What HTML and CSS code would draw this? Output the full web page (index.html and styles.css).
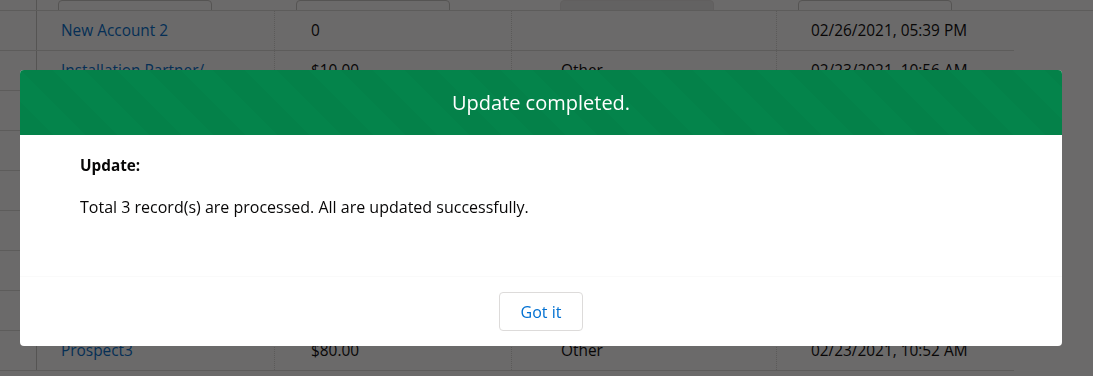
FILE: index.html
```html
<!DOCTYPE html>
<html lang="en">
<head>
  <meta charset="UTF-8" />
  <title>Mass Update</title>
  <link rel="stylesheet" href="styles.css">
</head>
<body>
  <main class="grid">
    <div class="filter-row">
      <div class="num-col"></div>
      <div class="filter-cell c1"><span class="filter-box"></span></div>
      <div class="filter-cell c2"><span class="filter-box"></span></div>
      <div class="filter-cell c3"><span class="filter-box disabled"></span></div>
      <div class="filter-cell c4"><span class="filter-box"></span></div>
    </div>

    <div class="row">
      <div class="num-col"></div>
      <div class="cell c1"><a href="#">New Account 2</a></div>
      <div class="cell c2">0</div>
      <div class="cell c3"></div>
      <div class="cell c4">02/26/2021, 05:39 PM</div>
    </div>
    <div class="row">
      <div class="num-col"></div>
      <div class="cell c1"><a href="#">Installation Partner/</a></div>
      <div class="cell c2">$10.00</div>
      <div class="cell c3">Other</div>
      <div class="cell c4">02/23/2021, 10:56 AM</div>
    </div>
    <div class="row">
      <div class="num-col"></div>
      <div class="cell c1"><a href="#">Prospect1</a></div>
      <div class="cell c2">$40.00</div>
      <div class="cell c3">Other</div>
      <div class="cell c4">02/23/2021, 10:54 AM</div>
    </div>
    <div class="row">
      <div class="num-col"></div>
      <div class="cell c1"><a href="#">Prospect2</a></div>
      <div class="cell c2">$60.00</div>
      <div class="cell c3">Other</div>
      <div class="cell c4">02/23/2021, 10:53 AM</div>
    </div>
    <div class="row">
      <div class="num-col"></div>
      <div class="cell c1"><a href="#">Customer A</a></div>
      <div class="cell c2">$20.00</div>
      <div class="cell c3">Banking</div>
      <div class="cell c4">02/22/2021, 04:12 PM</div>
    </div>
    <div class="row">
      <div class="num-col"></div>
      <div class="cell c1"><a href="#">Customer B</a></div>
      <div class="cell c2">$30.00</div>
      <div class="cell c3">Retail</div>
      <div class="cell c4">02/22/2021, 04:10 PM</div>
    </div>
    <div class="row">
      <div class="num-col"></div>
      <div class="cell c1"><a href="#">Partner Co</a></div>
      <div class="cell c2">$50.00</div>
      <div class="cell c3">Other</div>
      <div class="cell c4">02/22/2021, 03:58 PM</div>
    </div>
    <div class="row">
      <div class="num-col"></div>
      <div class="cell c1"><a href="#">Sample Account</a></div>
      <div class="cell c2">$70.00</div>
      <div class="cell c3">Other</div>
      <div class="cell c4">02/22/2021, 03:41 PM</div>
    </div>
    <div class="row">
      <div class="num-col"></div>
      <div class="cell c1"><a href="#">Prospect3</a></div>
      <div class="cell c2">$80.00</div>
      <div class="cell c3">Other</div>
      <div class="cell c4">02/23/2021, 10:52 AM</div>
    </div>
  </main>

  <div class="backdrop">
    <section class="modal" role="dialog">
      <header class="modal-header">
        <h2>Update completed.</h2>
      </header>
      <div class="modal-body">
        <p class="label">Update:</p>
        <p class="message">Total 3 record(s) are processed. All are updated successfully.</p>
      </div>
      <footer class="modal-footer">
        <button class="btn-neutral">Got it</button>
      </footer>
    </section>
  </div>
</body>
</html>
```

FILE: styles.css
```css
body {
  font-family: "Open Sans", "Noto Sans", sans-serif;
  margin: 0;
  padding: 0;
  background: #fff;
  color: #080707;
  font-size: 15.4px;
  overflow: hidden;
}

.grid {
  width: 1093px;
}

.filter-row {
  display: grid;
  grid-template-columns: 37px 238px 237px 265px 316px;
  height: 10px;
  overflow: hidden;
  border-bottom: 1px solid #dddbda;
}

.filter-cell {
  display: flex;
  align-items: flex-end;
  padding-bottom: 6px;
}

.filter-box {
  display: block;
  width: 152px;
  height: 30px;
  flex-shrink: 0;
  border: 1px solid #c9c7c5;
  border-radius: 4px;
  background: #fff;
}

.filter-box.disabled {
  background: #ecebea;
  border-color: #e5e4e3;
}

.filter-cell.c1 { padding-left: 21px; }
.filter-cell.c2 { padding-left: 21px; }
.filter-cell.c3 { padding-left: 48px; }
.filter-cell.c4 { padding-left: 21px; }

.num-col {
  border-right: 1px solid #c9c7c5;
}

.row {
  display: grid;
  grid-template-columns: 37px 238px 237px 265px 237px;
  width: 1014px;
  height: 39px;
  border-bottom: 1px solid #dddbda;
}

.row:first-of-type {
  height: 40px;
}

.cell {
  display: flex;
  align-items: center;
  white-space: nowrap;
  overflow: hidden;
  border-right: 1px dotted #d8d6d4;
}

.cell.c4 {
  border-right: none;
}

.cell.c1 { padding-left: 24px; }
.cell.c2 { padding-left: 36px; }
.cell.c3 { padding-left: 49px; }
.cell.c4 { padding-left: 34px; }

.cell a {
  color: #006dcc;
  text-decoration: none;
}

.backdrop {
  position: fixed;
  inset: 0;
  background: rgba(8, 7, 7, 0.6);
  padding: 70px 31px 0 20px;
}

.modal {
  background: #fff;
  border-radius: 4px;
  overflow: hidden;
}

.modal-header {
  height: 65px;
  display: flex;
  align-items: center;
  justify-content: center;
  background-color: #04844b;
  background-image: linear-gradient(45deg, rgba(0, 0, 0, 0.025) 25%, transparent 25%, transparent 50%, rgba(0, 0, 0, 0.025) 50%, rgba(0, 0, 0, 0.025) 75%, transparent 75%, transparent);
  background-size: 64px 64px;
  color: #fff;
}

.modal-header h2 {
  margin: 0;
  font-size: 20px;
  font-weight: 400;
}

.modal-body {
  height: 141px;
  box-sizing: border-box;
  padding: 20px 60px;
}

.modal-body p {
  margin: 0;
  line-height: 20px;
}

.label {
  font-size: 15.3px;
  font-weight: 700;
}

.message {
  font-size: 16px;
  margin-top: 22px !important;
}

.modal-footer {
  border-top: 1px solid #fafafa;
  padding: 15px 0;
  display: flex;
  justify-content: center;
}

.btn-neutral {
  width: 84px;
  height: 39px;
  background: #fff;
  border: 1px solid #dddbda;
  border-radius: 4px;
  color: #0070d2;
  font-family: inherit;
  font-size: 16px;
  cursor: pointer;
}
```
